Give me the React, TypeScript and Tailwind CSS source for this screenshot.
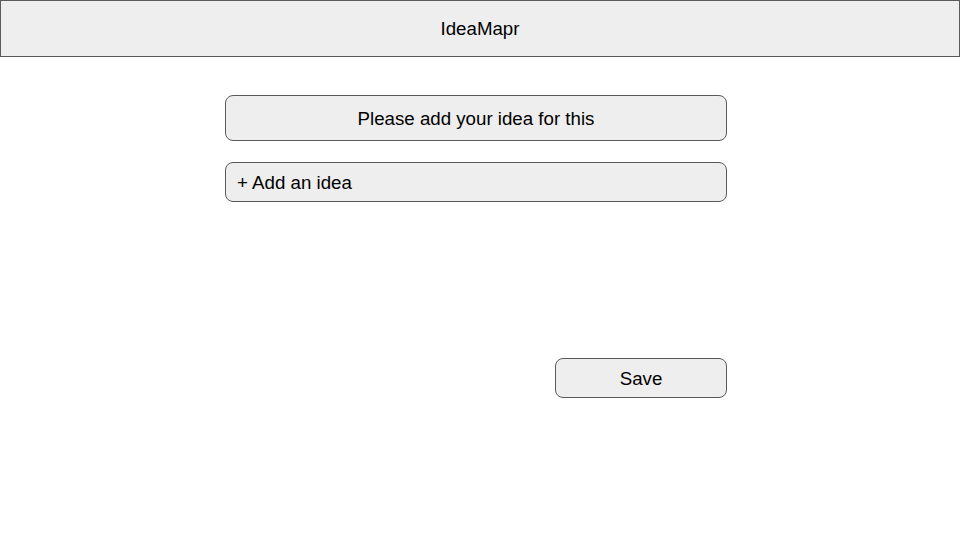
import React from "react";

export default function App() {
  return (
    <div className="w-[960px] h-[540px] bg-white font-['Liberation_Sans',Arial,sans-serif] text-black">
      <header className="h-[57px] border border-[#5a5a5a] bg-[#eeeeee] flex items-center justify-center text-[18.7px] pt-px">
        IdeaMapr
      </header>
      <main className="ml-[225px] w-[502px] pt-[38px] flex flex-col">
        <div className="h-[46px] rounded-lg border border-[#5a5a5a] bg-[#eeeeee] flex items-center justify-center text-[18.7px] pt-[3px]">
          Please add your idea for this
        </div>
        <button className="mt-[21px] h-[40px] rounded-lg border border-[#5a5a5a] bg-[#eeeeee] flex items-center px-[11px] text-[18.7px] text-left pt-[2px]">
          + Add an idea
        </button>
        <div className="mt-[156px] flex justify-end">
          <button className="w-[172px] h-[40px] rounded-lg border border-[#5a5a5a] bg-[#eeeeee] flex items-center justify-center text-[18.7px] pt-[3px]">
            Save
          </button>
        </div>
      </main>
    </div>
  );
}
